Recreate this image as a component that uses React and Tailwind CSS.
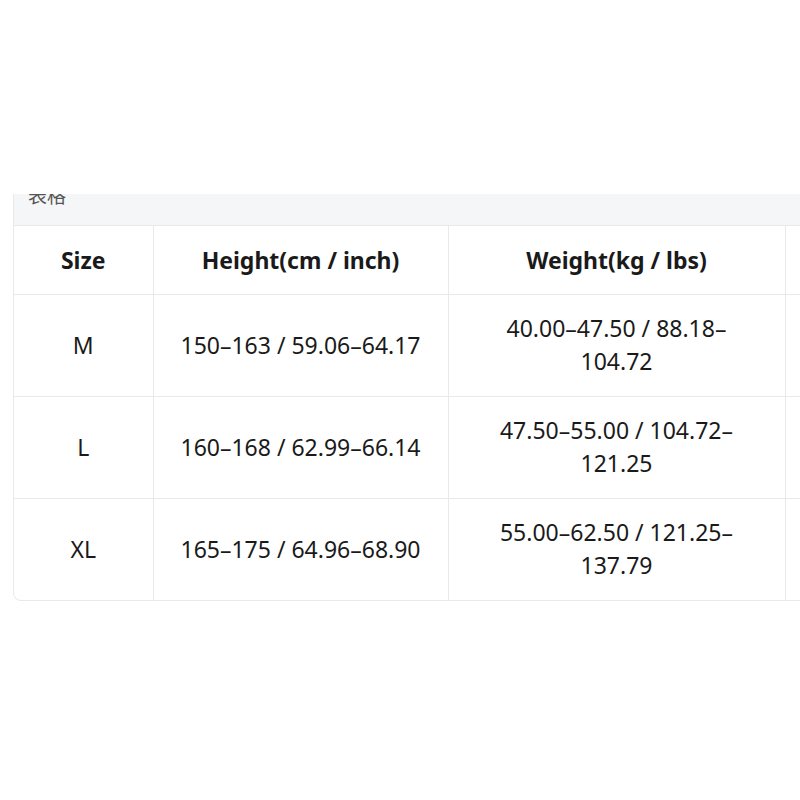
const rows = [
  { size: "M", height: "150–163 / 59.06–64.17", weight: "40.00–47.50 / 88.18–104.72" },
  { size: "L", height: "160–168 / 62.99–66.14", weight: "47.50–55.00 / 104.72–121.25" },
  { size: "XL", height: "165–175 / 64.96–68.90", weight: "55.00–62.50 / 121.25–137.79" },
];

export default function App() {
  return (
    <div
      className="w-[800px] h-[800px] overflow-hidden bg-white pt-[194px] text-[#1a1a1a]"
      style={{ fontFamily: '"Noto Sans", "Noto Sans CJK SC", sans-serif' }}
    >
      <div className="ml-[13px] w-[972px] border-l border-b border-[#e8e9eb] rounded-bl-lg overflow-hidden">
        <div className="h-[32px] bg-[#f5f6f8] overflow-hidden border-b border-[#e8e9eb]">
          <div className="-mt-[12px] pl-[14px] text-[19px] leading-[28px] text-[#555]">表格</div>
        </div>
        <table className="w-[972px] table-fixed border-collapse text-[23px]">
          <colgroup>
            <col className="w-[139px]" />
            <col className="w-[295px]" />
            <col className="w-[337px]" />
            <col className="w-[201px]" />
          </colgroup>
          <thead>
            <tr className="h-[68px]">
              <th className="border-r border-b border-[#e8e9eb] font-bold">Size</th>
              <th className="border-r border-b border-[#e8e9eb] font-bold">Height(cm / inch)</th>
              <th className="border-r border-b border-[#e8e9eb] font-bold">Weight(kg / lbs)</th>
              <th className="border-b border-[#e8e9eb]"></th>
            </tr>
          </thead>
          <tbody>
            {rows.map((r, i) => (
              <tr key={r.size} className="h-[102px]">
                <td className={`border-r border-[#e8e9eb] text-center ${i < 2 ? "border-b" : ""}`}>{r.size}</td>
                <td className={`border-r border-[#e8e9eb] text-center ${i < 2 ? "border-b" : ""}`}>{r.height}</td>
                <td className={`border-r border-[#e8e9eb] text-center leading-[33px] px-[48px] ${i < 2 ? "border-b" : ""}`}>{r.weight}</td>
                <td className={`border-[#e8e9eb] ${i < 2 ? "border-b" : ""}`}></td>
              </tr>
            ))}
          </tbody>
        </table>
      </div>
    </div>
  );
}
